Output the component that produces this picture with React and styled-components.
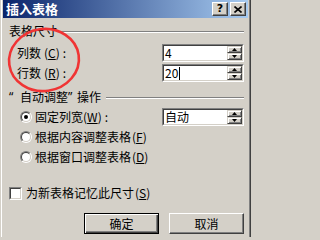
import React from 'react';
import styled, { createGlobalStyle } from 'styled-components';

const Global = createGlobalStyle`
  html, body { margin: 0; padding: 0; background: #d4d0c8; }
  body {
    font-family: "Noto Sans CJK SC", "Noto Sans", sans-serif;
    font-size: 12px;
    color: #000;
  }
`;

const Window = styled.div`
  position: relative;
  width: 251px;
  height: 237px;
  box-sizing: border-box;
  border-left: 1px solid #d4d0c8;
  border-right: 1px solid #404040;
  overflow: hidden;
`;

const Frame = styled.div`
  height: 100%;
  box-sizing: border-box;
  border-left: 1px solid #fff;
  border-right: 1px solid #808080;
  padding: 0 1px;
  display: flex;
  flex-direction: column;
`;

const TitleBar = styled.div`
  height: 18px;
  display: flex;
  align-items: center;
  background: linear-gradient(to right, #0a246a, #a6caf0);
  padding: 0 2px;
`;

const Title = styled.div`
  flex: 1;
  color: #fff;
  font-weight: bold;
  font-size: 13px;
  line-height: 18px;
  padding-left: 1px;
  white-space: nowrap;
`;

const CaptionButton = styled.div`
  width: 16px;
  height: 14px;
  box-sizing: border-box;
  background: #d4d0c8;
  border: 1px solid;
  border-color: #fff #404040 #404040 #fff;
  box-shadow: inset -1px -1px #808080;
  margin-left: ${p => p.$gap}px;
  display: flex;
  align-items: center;
  justify-content: center;
  font-family: "DejaVu Sans", sans-serif;
  font-weight: bold;
  font-size: 11px;
  line-height: 12px;
`;

const Content = styled.div`
  flex: 1;
  display: flex;
  flex-direction: column;
  padding: 6px 4px 0 6px;
`;

const GroupHeader = styled.div`
  height: 14px;
  display: flex;
  align-items: center;
  margin-top: ${p => p.$top || 0}px;
`;

const GroupLabel = styled.div`
  line-height: 14px;
  white-space: nowrap;
  display: flex;
  align-items: center;
`;

const Quote = styled.span`
  display: inline-block;
  width: ${p => p.$w}px;
  font-family: "Noto Sans", sans-serif;
  text-align: left;
`;

const GroupLine = styled.div`
  flex: 1;
  height: 0;
  border-top: 1px solid #808080;
  border-bottom: 1px solid #fff;
  margin-left: ${p => p.$gap}px;
  margin-top: 2px;
`;

const FieldRow = styled.div`
  height: 18px;
  display: flex;
  align-items: center;
  justify-content: space-between;
  margin-top: ${p => p.$top}px;
  padding-left: ${p => p.$indent}px;
`;

const Label = styled.div`
  line-height: 14px;
  white-space: nowrap;
  display: flex;
  align-items: center;
`;

const Key = styled.span`
  margin-left: ${p => p.$gap || 0}px;
`;

const Colon = styled.span`
  margin-left: 3px;
`;

const SpinBox = styled.div`
  width: 82px;
  height: 18px;
  box-sizing: border-box;
  border: 1px solid;
  border-color: #808080 #fff #fff #808080;
  display: flex;
`;

const SpinInner = styled.div`
  flex: 1;
  display: flex;
  border: 1px solid;
  border-color: #404040 #d4d0c8 #d4d0c8 #404040;
  background: #fff;
`;

const SpinText = styled.div`
  flex: 1;
  line-height: 14px;
  padding-left: 1px;
  display: flex;
  align-items: center;
  white-space: nowrap;
`;

const Caret = styled.span`
  display: inline-block;
  width: 1px;
  height: 13px;
  background: #000;
  margin-left: 1px;
`;

const SpinButtons = styled.div`
  width: 15px;
  display: flex;
  flex-direction: column;
`;

const SpinButton = styled.div`
  flex: 1;
  box-sizing: border-box;
  background: #d4d0c8;
  border: 1px solid;
  border-color: #d4d0c8 #404040 #404040 #d4d0c8;
  box-shadow: inset 1px 1px #fff, inset -1px -1px #808080;
  display: flex;
  align-items: center;
  justify-content: center;
`;

const RadioOuter = styled.span`
  width: 12px;
  height: 12px;
  box-sizing: border-box;
  border-radius: 50%;
  border: 1px solid;
  border-color: #808080 #fff #fff #808080;
  display: flex;
  flex: none;
`;

const RadioInner = styled.span`
  flex: 1;
  border-radius: 50%;
  border: 1px solid;
  border-color: #404040 #d4d0c8 #d4d0c8 #404040;
  background: #fff;
  display: flex;
  align-items: center;
  justify-content: center;
`;

const RadioDot = styled.span`
  width: 4px;
  height: 4px;
  border-radius: 50%;
  background: #000;
`;

const OptionLabel = styled.span`
  margin-left: ${p => p.$gap}px;
  line-height: 14px;
  white-space: nowrap;
`;

const Check = styled.span`
  width: 13px;
  height: 13px;
  box-sizing: border-box;
  border: 1px solid;
  border-color: #808080 #fff #fff #808080;
  display: flex;
  flex: none;
`;

const CheckInner = styled.span`
  flex: 1;
  border: 1px solid;
  border-color: #404040 #d4d0c8 #d4d0c8 #404040;
  background: #fff;
`;

const ButtonRow = styled.div`
  display: flex;
  justify-content: flex-end;
  gap: 10px;
  margin-top: 11px;
`;

const Button = styled.div`
  width: 75px;
  height: 21px;
  box-sizing: border-box;
  display: flex;
  align-items: center;
  justify-content: center;
  background: #d4d0c8;
  border: 1px solid;
  border-color: ${p => (p.$default ? '#000' : '#fff #404040 #404040 #fff')};
  box-shadow: ${p =>
    p.$default
      ? 'inset 1px 1px #fff, inset -1px -1px #404040, inset -2px -2px #808080'
      : 'inset -1px -1px #808080'};
  line-height: 14px;
`;

const Annotation = styled.svg`
  position: absolute;
  left: 0;
  top: 0;
  pointer-events: none;
`;

const Arrow = ({ up }) => (
  <svg width="5" height="3" viewBox="0 0 5 3">
    <polygon points={up ? '2.5,0 5,3 0,3' : '0,0 5,0 2.5,3'} fill="#000" />
  </svg>
);

const Spin = ({ children }) => (
  <SpinBox>
    <SpinInner>
      <SpinText>{children}</SpinText>
      <SpinButtons>
        <SpinButton><Arrow up /></SpinButton>
        <SpinButton><Arrow /></SpinButton>
      </SpinButtons>
    </SpinInner>
  </SpinBox>
);

const Radio = ({ checked }) => (
  <RadioOuter>
    <RadioInner>{checked && <RadioDot />}</RadioInner>
  </RadioOuter>
);

export default function App() {
  return (
    <>
      <Global />
      <Window>
        <Frame>
          <TitleBar>
            <Title>插入表格</Title>
            <CaptionButton $gap={0}>?</CaptionButton>
            <CaptionButton $gap={2}>
              <svg width="8" height="7" viewBox="0 0 8 7">
                <path d="M0.5 0.5 L7.5 6.5 M7.5 0.5 L0.5 6.5" stroke="#000" strokeWidth="1.6" />
              </svg>
            </CaptionButton>
          </TitleBar>
          <Content>
            <GroupHeader>
              <GroupLabel>表格尺寸</GroupLabel>
              <GroupLine $gap={4} />
            </GroupHeader>
            <FieldRow $top={6} $indent={8}>
              <Label>列数<Key $gap={3}>(<u>C</u>)</Key><Colon>:</Colon></Label>
              <Spin>4</Spin>
            </FieldRow>
            <FieldRow $top={2} $indent={8}>
              <Label>行数<Key $gap={3}>(<u>R</u>)</Key><Colon>:</Colon></Label>
              <Spin>20<Caret /></Spin>
            </FieldRow>

            <GroupHeader $top={8}>
              <GroupLabel>
                <Quote $w={11}>“</Quote>自动调整<Quote $w={9}>”</Quote>操作
              </GroupLabel>
              <GroupLine $gap={5} />
            </GroupHeader>
            <FieldRow $top={4} $indent={11}>
              <Label>
                <Radio checked />
                <OptionLabel $gap={3}>固定列宽<Key>(<u>W</u>)</Key><Colon>:</Colon></OptionLabel>
              </Label>
              <Spin>自动</Spin>
            </FieldRow>
            <FieldRow $top={2} $indent={11}>
              <Label>
                <Radio />
                <OptionLabel $gap={3}>根据内容调整表格<Key $gap={1}>(<u>F</u>)</Key></OptionLabel>
              </Label>
            </FieldRow>
            <FieldRow $top={2} $indent={11}>
              <Label>
                <Radio />
                <OptionLabel $gap={3}>根据窗口调整表格<Key $gap={1}>(<u>D</u>)</Key></OptionLabel>
              </Label>
            </FieldRow>

            <FieldRow $top={18} $indent={0}>
              <Label>
                <Check><CheckInner /></Check>
                <OptionLabel $gap={4}>为新表格记忆此尺寸<Key $gap={1}>(<u>S</u>)</Key></OptionLabel>
              </Label>
            </FieldRow>

            <ButtonRow>
              <Button $default>确定</Button>
              <Button>取消</Button>
            </ButtonRow>
          </Content>
        </Frame>
        <Annotation width="253" height="237" viewBox="0 0 253 237">
          <ellipse
            cx="43"
            cy="60"
            rx="35"
            ry="31"
            fill="none"
            stroke="#f03434"
            strokeWidth="2.6"
            transform="rotate(-8 43 60)"
          />
        </Annotation>
      </Window>
    </>
  );
}
